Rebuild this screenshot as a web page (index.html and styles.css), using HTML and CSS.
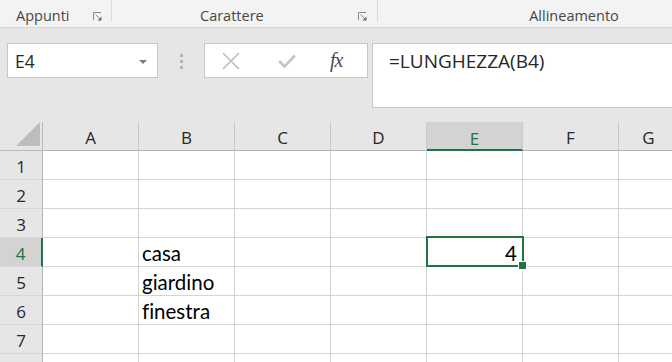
FILE: index.html
```html
<!DOCTYPE html>
<html lang="it">
<head>
    <meta charset="UTF-8">
    <meta name="viewport" content="width=device-width, initial-scale=1.0">
    <title>Excel - LUNGHEZZA</title>
    <link rel="stylesheet" href="styles.css">
</head>
<body>
    <div class="ribbon">
        <div class="group g-appunti">
            <span class="group-label">Appunti</span>
            <span class="launcher"><svg width="9" height="9" viewBox="0 0 9 9"><path d="M0.5 8V0.5H8" fill="none" stroke="#8a8a8a"/><path d="M2.5 2.5L7 7" stroke="#8a8a8a"/><path d="M8.5 4.5V8.5H4.5Z" fill="#6a6a6a"/></svg></span>
        </div>
        <div class="group g-carattere">
            <span class="group-label">Carattere</span>
            <span class="launcher"><svg width="9" height="9" viewBox="0 0 9 9"><path d="M0.5 8V0.5H8" fill="none" stroke="#8a8a8a"/><path d="M2.5 2.5L7 7" stroke="#8a8a8a"/><path d="M8.5 4.5V8.5H4.5Z" fill="#6a6a6a"/></svg></span>
        </div>
        <div class="group g-allineamento">
            <span class="group-label">Allineamento</span>
        </div>
    </div>

    <div class="formula-bar">
        <div class="name-box">
            <span>E4</span>
            <svg class="caret" width="8" height="4" viewBox="0 0 8 4"><path d="M0 0H8L4 4Z" fill="#7a7a7a"/></svg>
        </div>
        <div class="grip"><i></i><i></i><i></i></div>
        <div class="func-box">
            <svg class="ico" width="18" height="18" viewBox="0 0 18 18"><path d="M1 1L17 17M17 1L1 17" stroke="#bdbdbd" stroke-width="1.6" fill="none"/></svg>
            <svg class="ico" width="18" height="14" viewBox="0 0 18 14"><path d="M1 7L6.5 12.5L17 1.5" stroke="#c4c4c4" stroke-width="2.6" fill="none"/></svg>
            <span class="fx">fx</span>
        </div>
        <div class="formula-input">=LUNGHEZZA(B4)</div>
    </div>

    <div class="sheet">
        <div class="corner"><svg width="24" height="24" viewBox="0 0 24 24"><path d="M24 0V24H0Z" fill="#bdbdbd"/></svg></div>
        <div class="col-head">A</div>
        <div class="col-head">B</div>
        <div class="col-head">C</div>
        <div class="col-head">D</div>
        <div class="col-head sel">E</div>
        <div class="col-head">F</div>
        <div class="col-head">G</div>

        <div class="row-head">1</div>
        <div class="cell"></div><div class="cell"></div><div class="cell"></div><div class="cell"></div><div class="cell"></div><div class="cell"></div><div class="cell"></div>

        <div class="row-head">2</div>
        <div class="cell"></div><div class="cell"></div><div class="cell"></div><div class="cell"></div><div class="cell"></div><div class="cell"></div><div class="cell"></div>

        <div class="row-head">3</div>
        <div class="cell"></div><div class="cell"></div><div class="cell"></div><div class="cell"></div><div class="cell"></div><div class="cell"></div><div class="cell"></div>

        <div class="row-head sel">4</div>
        <div class="cell"></div><div class="cell">casa</div><div class="cell"></div><div class="cell"></div><div class="cell num active">4</div><div class="cell"></div><div class="cell"></div>

        <div class="row-head">5</div>
        <div class="cell"></div><div class="cell">giardino</div><div class="cell"></div><div class="cell"></div><div class="cell"></div><div class="cell"></div><div class="cell"></div>

        <div class="row-head">6</div>
        <div class="cell"></div><div class="cell">finestra</div><div class="cell"></div><div class="cell"></div><div class="cell"></div><div class="cell"></div><div class="cell"></div>

        <div class="row-head">7</div>
        <div class="cell"></div><div class="cell"></div><div class="cell"></div><div class="cell"></div><div class="cell"></div><div class="cell"></div><div class="cell"></div>

        <div class="row-head"></div>
        <div class="cell"></div><div class="cell"></div><div class="cell"></div><div class="cell"></div><div class="cell"></div><div class="cell"></div><div class="cell"></div>
    </div>
</body>
</html>
```

FILE: styles.css
```css
*{margin:0;padding:0;box-sizing:border-box}
body{width:672px;height:362px;overflow:hidden;background:#e6e6e6;font-family:"Open Sans","Noto Sans",sans-serif;color:#262626}

/* ribbon */
.ribbon{display:flex;height:28px;background:#f3f3f3;border-bottom:1px solid #d6d6d6;width:800px}
.group{display:flex;align-items:center;height:22px;border-right:1px solid #dadada}
.group-label{font-size:14.5px;color:#474747;padding-top:9px}
.launcher{display:flex;padding-top:10px}
.g-appunti{width:112px;padding-left:16px}
.g-appunti .launcher{margin-left:23px}
.g-carattere{width:266px;padding-left:88px}
.g-carattere .launcher{margin-left:94px}
.g-allineamento{width:392px;justify-content:center;border-right:0}

/* formula bar */
.formula-bar{display:flex;align-items:flex-start;height:94px;padding:15px 0 0 7px}
.name-box{width:151px;height:35px;background:#fff;border:1px solid #c6c6c6;display:flex;align-items:center;justify-content:space-between;padding:0 10px 0 7px;font-size:17.5px;color:#262626}
.caret{margin-top:2px}
.grip{display:flex;flex-direction:column;gap:3px;width:46px;align-items:center;padding-top:11px}
.grip i{display:block;width:3px;height:3px;background:#b4b4b4}
.func-box{width:164px;height:35px;background:#fff;border:1px solid #c6c6c6;display:flex;align-items:center;padding-left:17px}
.func-box .ico{margin-right:38px}
.func-box .ico + .ico{margin-right:34px}
.fx{font-family:"Liberation Serif",serif;font-style:italic;font-size:20px;color:#4a4a4a;letter-spacing:-1px}
.formula-input{flex:1;height:65px;margin-left:4px;background:#fff;border:1px solid #c6c6c6;border-right:0;padding:4px 0 0 16px;font-size:19px;color:#262626}

/* sheet */
.sheet{display:grid;grid-template-columns:43px repeat(6,96px) 60px;grid-auto-rows:29px}
.corner{display:flex;align-items:flex-end;justify-content:flex-end;padding:0 2px 4px 0;border-right:1px solid #bababa;border-bottom:1px solid #bababa}
.col-head{display:flex;align-items:center;justify-content:center;padding-top:3px;font-size:17px;border-right:1px solid #c9c9c9;border-bottom:1px solid #b4b4b4}
.col-head.sel{background:#d3d3d3;color:#217346;border-bottom:2px solid #217346;padding-top:5px}
.row-head{display:flex;align-items:center;justify-content:center;padding-top:3px;font-size:17px;border-right:1px solid #b4b4b4;border-bottom:1px solid #d6d6d6}
.row-head.sel{background:#d3d3d3;color:#217346;border-right:2px solid #217346}
.cell{background:#fff;border-right:1px solid #d4d4d4;border-bottom:1px solid #d4d4d4;font-family:Lato,"Noto Sans",sans-serif;font-size:20.5px;font-variant-ligatures:none;color:#000;display:flex;align-items:center;padding:1px 0 0 3px}
.cell.num{justify-content:flex-end;padding-right:5px}
.cell.active{position:relative}
.cell.active::after{content:"";position:absolute;left:-1px;top:-2px;right:-2px;bottom:-1px;border:2px solid #217346}
.cell.active::before{content:"";position:absolute;right:-5px;bottom:-4px;width:7px;height:7px;background:#217346;border:1px solid #fff;z-index:1}
```
